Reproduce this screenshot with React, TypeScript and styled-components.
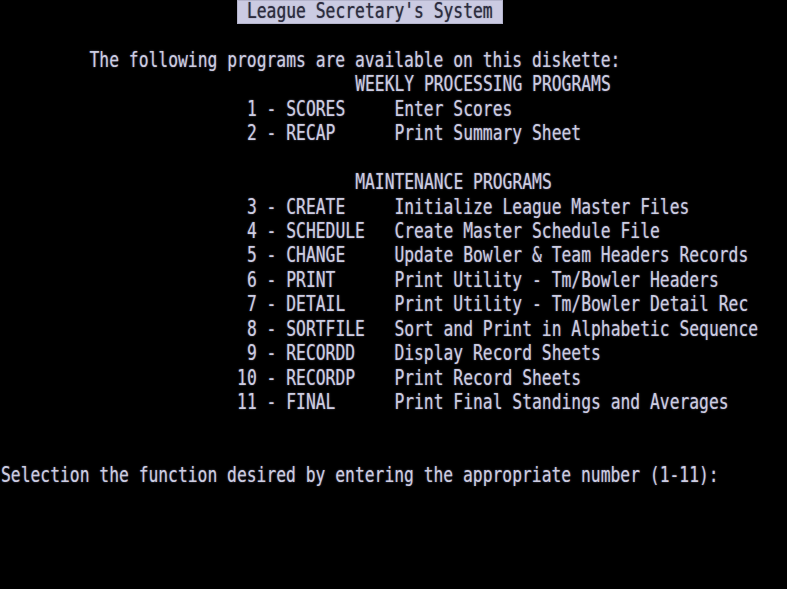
import React from "react";
import styled, { createGlobalStyle } from "styled-components";

const ROW_H = 24.45;
const CELL_W = 787 / 80;

const GlobalStyle = createGlobalStyle`
  html, body {
    margin: 0;
    padding: 0;
    background: #000;
  }
`;

const Screen = styled.div`
  width: 787px;
  height: 589px;
  background: #000;
  overflow: hidden;
  display: flex;
  flex-direction: column;
  padding-left: 1px;
  box-sizing: border-box;
  font-family: "DejaVu Sans Mono", "Liberation Mono", monospace;
  font-size: ${CELL_W / 0.602}px;
  color: #cdcde2;
`;

const Row = styled.div`
  height: ${ROW_H}px;
  flex: 0 0 ${ROW_H}px;
  display: flex;
  align-items: center;
  white-space: pre;
  line-height: ${ROW_H}px;
`;

const Glyphs = styled.span<{ $dark?: boolean }>`
  display: inline-block;
  transform: scaleY(1.28);
  transform-origin: left center;
  text-shadow: ${(p) =>
    p.$dark
      ? "0 0 1px rgba(30, 30, 50, 0.6)"
      : "0 0 1.5px rgba(200, 200, 235, 0.55)"};
`;

const Inverse = styled.span`
  display: flex;
  align-items: center;
  height: ${ROW_H}px;
  background: #cbcbe2;
  color: #2c2c3e;
  box-shadow: inset 0 0 0 1px #b4b4cc;
`;

type Item = { n: number; name: string; desc: string };

const weekly: Item[] = [
  { n: 1, name: "SCORES", desc: "Enter Scores" },
  { n: 2, name: "RECAP", desc: "Print Summary Sheet" },
];

const maintenance: Item[] = [
  { n: 3, name: "CREATE", desc: "Initialize League Master Files" },
  { n: 4, name: "SCHEDULE", desc: "Create Master Schedule File" },
  { n: 5, name: "CHANGE", desc: "Update Bowler & Team Headers Records" },
  { n: 6, name: "PRINT", desc: "Print Utility - Tm/Bowler Headers" },
  { n: 7, name: "DETAIL", desc: "Print Utility - Tm/Bowler Detail Rec" },
  { n: 8, name: "SORTFILE", desc: "Sort and Print in Alphabetic Sequence" },
  { n: 9, name: "RECORDD", desc: "Display Record Sheets" },
  { n: 10, name: "RECORDP", desc: "Print Record Sheets" },
  { n: 11, name: "FINAL", desc: "Print Final Standings and Averages" },
];

const itemLine = (it: Item) =>
  String(it.n).padStart(2, " ") + " - " + it.name.padEnd(11, " ") + it.desc;

const Indent = styled.span<{ $cols: number }>`
  display: inline-block;
  flex: 0 0 auto;
  width: ${(p) => p.$cols * CELL_W}px;
`;

const TextLine: React.FC<{ text?: string; col?: number }> = ({ text = "", col = 0 }) => (
  <Row>
    {col > 0 && <Indent $cols={col} />}
    <Glyphs>{text}</Glyphs>
  </Row>
);

export default function App() {
  return (
    <>
      <GlobalStyle />
      <Screen>
        <Row>
          <Indent $cols={24} />
          <Inverse>
            <Glyphs $dark>{" League Secretary's System "}</Glyphs>
          </Inverse>
        </Row>
        <TextLine />
        <TextLine col={9} text="The following programs are available on this diskette:" />
        <TextLine col={36} text="WEEKLY PROCESSING PROGRAMS" />
        {weekly.map((it) => (
          <TextLine key={it.n} col={24} text={itemLine(it)} />
        ))}
        <TextLine />
        <TextLine col={36} text="MAINTENANCE PROGRAMS" />
        {maintenance.map((it) => (
          <TextLine key={it.n} col={24} text={itemLine(it)} />
        ))}
        <TextLine />
        <TextLine />
        <TextLine text="Selection the function desired by entering the appropriate number (1-11):" />
      </Screen>
    </>
  );
}
